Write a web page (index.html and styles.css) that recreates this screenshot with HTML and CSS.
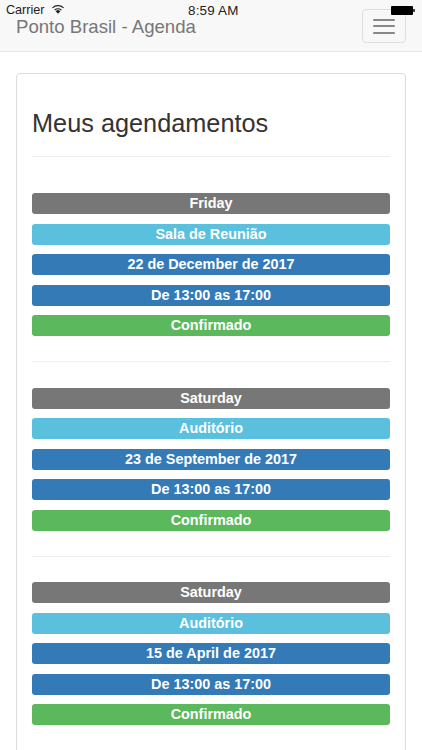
FILE: index.html
```html
<!DOCTYPE html>
<html>
<head>
<meta charset="utf-8"/>
<title>Ponto Brasil - Agenda</title>
<link rel="stylesheet" href="styles.css">
</head>
<body>

<!-- iOS status bar, lies over the navbar -->
<div class="status">
	<span class="carrier">Carrier</span>
	<svg class="wifi" width="14" height="10" viewBox="0 0 14 10">
		<path d="M7 9.8 4.7 7.2a3.2 3.2 0 0 1 4.6 0z" fill="#222"/>
		<path d="M3.2 5.7a5.6 5.6 0 0 1 7.6 0l-.8.9a4.4 4.4 0 0 0-6 0z" fill="#222"/>
		<path d="M1 3.4a8.8 8.8 0 0 1 12 0l-.8.9a7.6 7.6 0 0 0-10.4 0z" fill="#222"/>
	</svg>
	<span class="time">8:59 AM</span>
	<span class="battery"></span>
</div>

<nav class="navbar">
	<span class="brand">Ponto Brasil - Agenda</span>
	<button class="toggle" type="button">
		<span class="bar"></span>
		<span class="bar"></span>
		<span class="bar"></span>
	</button>
</nav>

<div class="panel">
	<h2>Meus agendamentos</h2>
	<hr class="first" />

	<div class="item">
		<div class="lbl grey">Friday</div>
		<div class="lbl cyan">Sala de Reunião</div>
		<div class="lbl blue">22 de December de 2017</div>
		<div class="lbl blue">De 13:00 as 17:00</div>
		<div class="lbl green">Confirmado</div>
	</div>
	<hr />

	<div class="item">
		<div class="lbl grey">Saturday</div>
		<div class="lbl cyan">Auditório</div>
		<div class="lbl blue">23 de September de 2017</div>
		<div class="lbl blue">De 13:00 as 17:00</div>
		<div class="lbl green">Confirmado</div>
	</div>
	<hr />

	<div class="item">
		<div class="lbl grey">Saturday</div>
		<div class="lbl cyan">Auditório</div>
		<div class="lbl blue">15 de April de 2017</div>
		<div class="lbl blue">De 13:00 as 17:00</div>
		<div class="lbl green">Confirmado</div>
	</div>
</div>

</body>
</html>
```

FILE: styles.css
```css
html, body { margin: 0; height: 750px; overflow: hidden; }
body { position: relative; font-family: "Liberation Sans", Arial, sans-serif; color: #333; background: #fff; }

.status { position: absolute; top: 0; left: 0; right: 0; height: 20px; font-size: 12.6px; color: #222; }
.carrier { position: absolute; left: 6px; top: 3px; }
.wifi { position: absolute; left: 51px; top: 4px; }
.time { position: absolute; left: 188px; top: 3px; font-size: 13.4px; letter-spacing: 0.2px; }
.battery { position: absolute; left: 391px; top: 6px; width: 22px; height: 9px; background: #000; border-radius: 1px; }
.battery::after { content: ""; position: absolute; left: 22px; top: 3px; width: 2px; height: 3px; background: #444; }

.navbar { display: flex; justify-content: space-between; height: 51px; padding: 0 16px; box-sizing: content-box; background: #f8f8f8; border-bottom: 1px solid #e7e7e7; }
.brand { font-size: 18.6px; line-height: 54px; color: #777; }
.toggle { display: flex; flex-direction: column; justify-content: center; gap: 4.5px; width: 44px; height: 34px; margin-top: 9px; padding: 0 10px; background: transparent; border: 1px solid #ddd; border-radius: 4px; }
.bar { display: block; height: 2px; background: #888; border-radius: 1px; }

.panel { margin: 21px 16px 0; padding: 15px; border: 1px solid #ddd; border-radius: 4px; }
h2 { margin: 19px 0 0; font-size: 25.3px; font-weight: normal; line-height: 30px; color: #333; }
hr { margin: 0 0 25.25px; border: 0; border-top: 1px solid #eee; }
hr.first { margin: 18px 0 36px; }
.item { margin-bottom: 25.25px; }
.lbl { height: 21px; margin-bottom: 9.5px; border-radius: 3px; font-size: 14.4px; font-weight: bold; line-height: 20px; text-align: center; color: #fff; }
.item .lbl:last-child { margin-bottom: 0; }
.grey { background: #777; }
.cyan { background: #5bc0de; }
.blue { background: #337ab7; }
.green { background: #5cb85c; }
```
